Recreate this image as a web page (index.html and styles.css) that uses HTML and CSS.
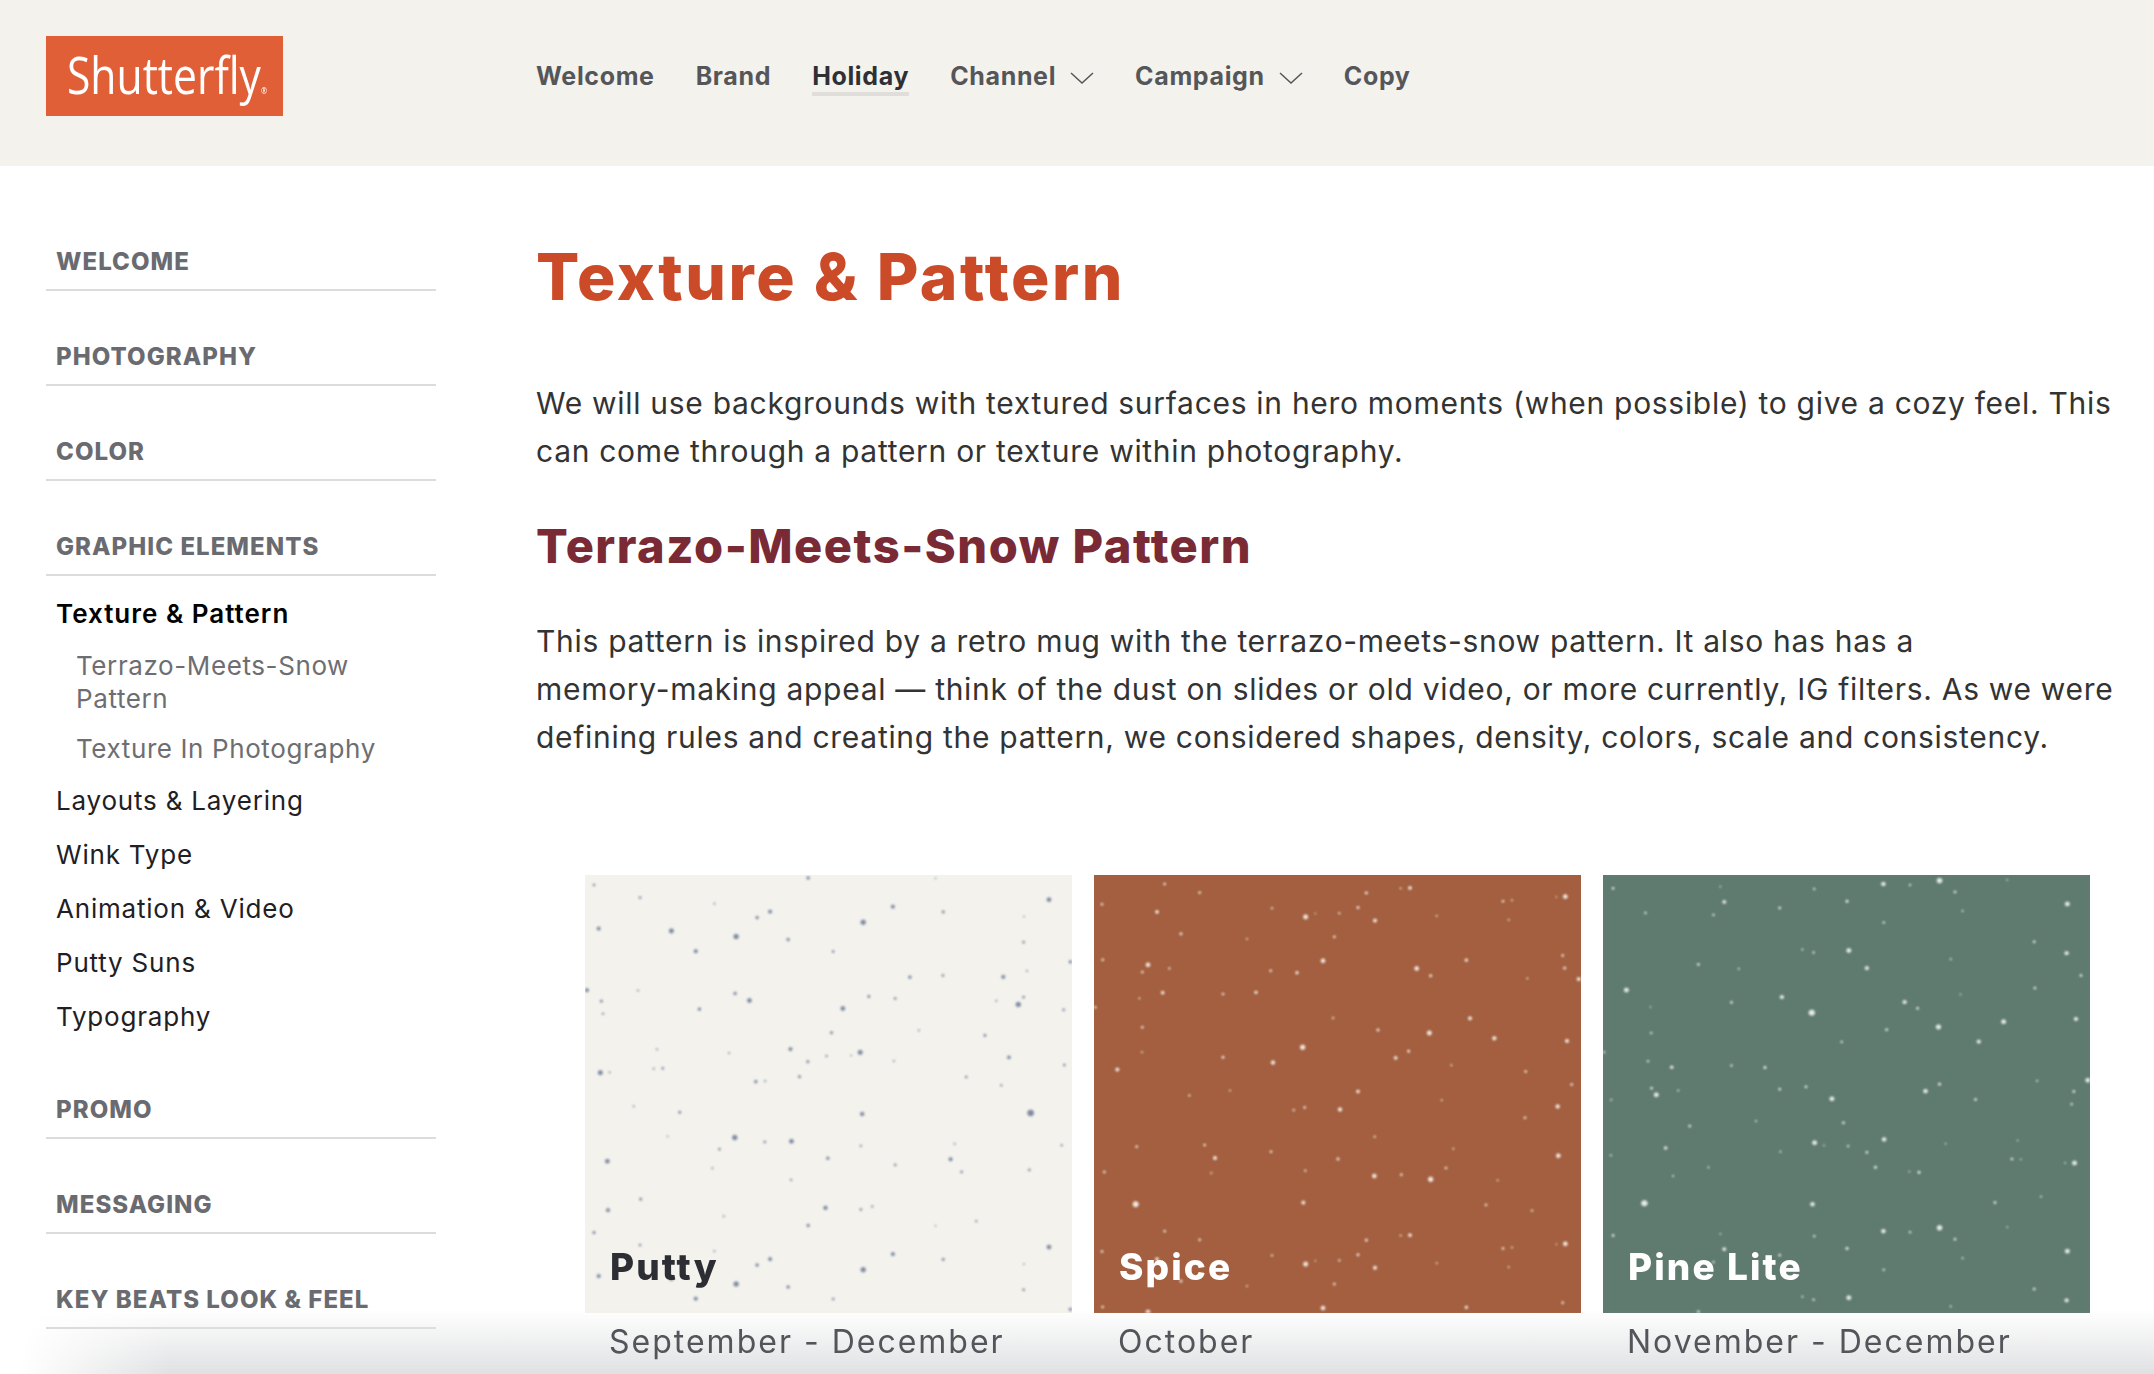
FILE: index.html
```html
<!DOCTYPE html>
<html lang="en">
<head>
  <meta charset="UTF-8" />
  <title>Texture &amp; Pattern - Shutterfly Holiday</title>
  <link rel="stylesheet" href="styles.css">
</head>
<body>
  <header class="topbar">
    <a class="logo"><span class="logo-word">Shutterfly<sup class="logo-reg">®</sup></span></a>
    <nav class="topnav">
      <a class="topnav-link">Welcome</a>
      <a class="topnav-link">Brand</a>
      <a class="topnav-link active">Holiday</a>
      <a class="topnav-link">Channel <svg class="chevron" viewBox="0 0 24 12"><polyline points="1,1 12,11 23,1"/></svg></a>
      <a class="topnav-link">Campaign <svg class="chevron" viewBox="0 0 24 12"><polyline points="1,1 12,11 23,1"/></svg></a>
      <a class="topnav-link">Copy</a>
    </nav>
  </header>

  <div class="page">
    <aside class="sidebar">
      <h4 class="side-head">WELCOME</h4>
      <h4 class="side-head">PHOTOGRAPHY</h4>
      <h4 class="side-head">COLOR</h4>
      <h4 class="side-head">GRAPHIC ELEMENTS</h4>
      <ul class="side-list">
        <li class="side-item current">Texture &amp; Pattern
          <ul class="side-sub">
            <li>Terrazo-Meets-Snow<br>Pattern</li>
            <li>Texture In Photography</li>
          </ul>
        </li>
        <li class="side-item">Layouts &amp; Layering</li>
        <li class="side-item">Wink Type</li>
        <li class="side-item">Animation &amp; Video</li>
        <li class="side-item">Putty Suns</li>
        <li class="side-item">Typography</li>
      </ul>
      <h4 class="side-head">PROMO</h4>
      <h4 class="side-head">MESSAGING</h4>
      <h4 class="side-head">KEY BEATS LOOK &amp; FEEL</h4>
    </aside>

    <main class="content">
      <h1>Texture &amp; Pattern</h1>
      <p>We will use backgrounds with textured surfaces in hero moments (when possible) to give a cozy feel. This<br>can come through a pattern or texture within photography.</p>
      <h2>Terrazo-Meets-Snow Pattern</h2>
      <p>This pattern is inspired by a retro mug with the terrazo-meets-snow pattern. It also has has a<br>memory-making appeal — think of the dust on slides or old video, or more currently, IG filters. As we were<br>defining rules and creating the pattern, we considered shapes, density, colors, scale and consistency.</p>

      <div class="swatches">
        <figure class="swatch putty">
          <svg class="speckle" viewBox="44 45 1460 1316" preserveAspectRatio="none">
            <g id="dots-putty">
              <circle cx="713" cy="54" r="4"/><circle cx="71" cy="75" r="3"/><circle cx="209" cy="113" r="3"/><circle cx="432" cy="131" r="2"/><circle cx="1095" cy="55" r="1.5"/><circle cx="1435" cy="119" r="6"/><circle cx="599" cy="155" r="5"/><circle cx="560" cy="173" r="4"/><circle cx="967" cy="140" r="5"/><circle cx="1118" cy="156" r="3.5"/><circle cx="1360" cy="170" r="1.5"/><circle cx="878" cy="187" r="7"/><circle cx="85" cy="206" r="5"/><circle cx="303" cy="213" r="6.5"/><circle cx="497" cy="230" r="7"/><circle cx="653" cy="239" r="4"/><circle cx="376" cy="274" r="5"/><circle cx="788" cy="275" r="3"/><circle cx="1359" cy="247" r="3"/><circle cx="1499" cy="306" r="4"/>
              <circle cx="1369" cy="333" r="2"/><circle cx="1018" cy="352" r="4"/><circle cx="1117" cy="347" r="3"/><circle cx="1298" cy="351" r="5"/><circle cx="50" cy="391" r="5"/><circle cx="203" cy="392" r="2"/><circle cx="494" cy="401" r="4"/><circle cx="537" cy="422" r="6"/><circle cx="93" cy="424" r="3.5"/><circle cx="387" cy="448" r="4"/><circle cx="98" cy="462" r="2.5"/><circle cx="817" cy="446" r="6"/><circle cx="895" cy="410" r="3.5"/><circle cx="974" cy="416" r="3"/><circle cx="1277" cy="423" r="2"/><circle cx="1343" cy="434" r="7"/><circle cx="1359" cy="412" r="3"/><circle cx="1479" cy="450" r="3"/><circle cx="783" cy="519" r="3.5"/><circle cx="1045" cy="512" r="2"/>
              <circle cx="1243" cy="527" r="3.5"/><circle cx="260" cy="569" r="2"/><circle cx="476" cy="580" r="2"/><circle cx="660" cy="568" r="5"/><circle cx="869" cy="578" r="6.5"/><circle cx="768" cy="589" r="2.5"/><circle cx="842" cy="587" r="1.5"/><circle cx="712" cy="606" r="3.5"/><circle cx="970" cy="604" r="2"/><circle cx="1315" cy="593" r="4.5"/><circle cx="1481" cy="616" r="3"/><circle cx="90" cy="639" r="6.5"/><circle cx="118" cy="638" r="2"/><circle cx="250" cy="627" r="2"/><circle cx="277" cy="626" r="3"/><circle cx="556" cy="666" r="4"/><circle cx="584" cy="664" r="2"/><circle cx="687" cy="651" r="3.5"/><circle cx="1187" cy="652" r="3"/><circle cx="1292" cy="677" r="2.5"/>
              <circle cx="190" cy="740" r="2"/><circle cx="328" cy="758" r="3.5"/><circle cx="875" cy="763" r="5.5"/><circle cx="1380" cy="760" r="9"/><circle cx="292" cy="830" r="1.5"/><circle cx="493" cy="834" r="7"/><circle cx="583" cy="847" r="3"/><circle cx="663" cy="845" r="6"/><circle cx="871" cy="859" r="2.5"/><circle cx="1152" cy="853" r="2"/><circle cx="1473" cy="857" r="2.5"/><circle cx="447" cy="869" r="3"/><circle cx="111" cy="905" r="6"/><circle cx="772" cy="896" r="4"/><circle cx="1140" cy="899" r="5"/><circle cx="974" cy="916" r="3"/><circle cx="426" cy="926" r="2"/><circle cx="1173" cy="937" r="3"/><circle cx="1376" cy="931" r="3"/><circle cx="662" cy="961" r="2.5"/>
              <circle cx="211" cy="1019" r="3.5"/><circle cx="113" cy="1052" r="5"/><circle cx="765" cy="1045" r="5.5"/><circle cx="871" cy="1050" r="3"/><circle cx="905" cy="1041" r="2.5"/><circle cx="460" cy="1070" r="2"/><circle cx="1217" cy="1085" r="2.5"/><circle cx="71" cy="1120" r="3"/>
            </g>
            <use href="#dots-putty" y="1044"/>
          </svg>
          <figcaption class="swatch-name">Putty</figcaption>
        </figure>
        <figure class="swatch spice">
          <svg class="speckle" viewBox="41 45 1461 1317" preserveAspectRatio="none">
            <g id="dots-spice">
              <circle cx="253" cy="72" r="3"/><circle cx="358" cy="98" r="3"/><circle cx="858" cy="99" r="3.5"/><circle cx="961" cy="85" r="2"/><circle cx="989" cy="84" r="4.5"/><circle cx="1455" cy="110" r="6"/><circle cx="1428" cy="111" r="1.5"/><circle cx="1268" cy="124" r="3"/><circle cx="1295" cy="121" r="2"/><circle cx="65" cy="133" r="3"/><circle cx="230" cy="156" r="4.5"/><circle cx="575" cy="145" r="2.5"/><circle cx="676" cy="171" r="6.5"/><circle cx="705" cy="161" r="1.5"/><circle cx="777" cy="160" r="2.5"/><circle cx="833" cy="143" r="3.5"/><circle cx="884" cy="182" r="5"/><circle cx="1069" cy="168" r="2"/><circle cx="1285" cy="180" r="2"/><circle cx="302" cy="222" r="3.5"/>
              <circle cx="500" cy="237" r="2"/><circle cx="762" cy="231" r="3"/><circle cx="1447" cy="287" r="3"/><circle cx="67" cy="300" r="3"/><circle cx="728" cy="303" r="6"/><circle cx="1158" cy="301" r="4"/><circle cx="203" cy="315" r="6"/><circle cx="267" cy="326" r="2.5"/><circle cx="186" cy="337" r="3"/><circle cx="571" cy="333" r="3"/><circle cx="650" cy="339" r="4"/><circle cx="1009" cy="326" r="6"/><circle cx="1051" cy="348" r="3.5"/><circle cx="1453" cy="325" r="3.5"/><circle cx="1341" cy="356" r="2"/><circle cx="1495" cy="358" r="5"/><circle cx="247" cy="399" r="4.5"/><circle cx="428" cy="403" r="3"/><circle cx="527" cy="398" r="4"/><circle cx="177" cy="416" r="2"/>
              <circle cx="45" cy="443" r="3"/><circle cx="758" cy="475" r="2.5"/><circle cx="1169" cy="476" r="5"/><circle cx="186" cy="503" r="3"/><circle cx="893" cy="511" r="3.5"/><circle cx="1047" cy="520" r="6.5"/><circle cx="1242" cy="536" r="5.5"/><circle cx="1460" cy="544" r="5"/><circle cx="667" cy="563" r="7"/><circle cx="185" cy="578" r="2"/><circle cx="985" cy="575" r="3.5"/><circle cx="946" cy="595" r="4.5"/><circle cx="428" cy="593" r="3.5"/><circle cx="578" cy="609" r="5.5"/><circle cx="111" cy="630" r="5"/><circle cx="1113" cy="617" r="2"/><circle cx="1336" cy="636" r="3"/><circle cx="1474" cy="675" r="3"/><circle cx="449" cy="693" r="2"/><circle cx="833" cy="696" r="4.5"/>
              <circle cx="327" cy="708" r="2.5"/><circle cx="1084" cy="722" r="2"/><circle cx="1432" cy="741" r="5.5"/><circle cx="640" cy="752" r="2.5"/><circle cx="673" cy="744" r="3"/><circle cx="779" cy="750" r="5.5"/><circle cx="1334" cy="775" r="3"/><circle cx="883" cy="832" r="2.5"/><circle cx="373" cy="857" r="3"/><circle cx="169" cy="862" r="3"/><circle cx="572" cy="877" r="3"/><circle cx="1119" cy="868" r="2"/><circle cx="404" cy="896" r="5"/><circle cx="773" cy="899" r="3.5"/><circle cx="1434" cy="889" r="6"/><circle cx="72" cy="938" r="3"/><circle cx="675" cy="934" r="2.5"/><circle cx="393" cy="941" r="2"/><circle cx="1097" cy="926" r="3"/><circle cx="882" cy="950" r="6"/>
              <circle cx="963" cy="946" r="3"/><circle cx="1051" cy="960" r="7"/><circle cx="1252" cy="963" r="2"/><circle cx="1217" cy="1037" r="3"/><circle cx="669" cy="1030" r="5"/><circle cx="166" cy="1035" r="8"/><circle cx="1355" cy="1054" r="2.5"/>
            </g>
            <use href="#dots-spice" y="1044"/>
          </svg>
          <figcaption class="swatch-name light">Spice</figcaption>
        </figure>
        <figure class="swatch pine">
          <svg class="speckle" viewBox="37 45 1353 1317" preserveAspectRatio="none">
            <g id="dots-pine">
              <circle cx="972" cy="62" r="7"/><circle cx="816" cy="72" r="5.5"/><circle cx="890" cy="75" r="2.5"/><circle cx="65" cy="85" r="3"/><circle cx="363" cy="80" r="1.5"/><circle cx="624" cy="87" r="2.5"/><circle cx="1015" cy="96" r="3"/><circle cx="1160" cy="60" r="1.5"/><circle cx="374" cy="126" r="4.5"/><circle cx="715" cy="124" r="3.5"/><circle cx="1327" cy="132" r="6"/><circle cx="155" cy="159" r="2.5"/><circle cx="344" cy="165" r="2.5"/><circle cx="528" cy="144" r="3"/><circle cx="1036" cy="153" r="2"/><circle cx="817" cy="188" r="2.5"/><circle cx="1235" cy="246" r="3"/><circle cx="591" cy="269" r="2"/><circle cx="622" cy="278" r="2.5"/><circle cx="720" cy="272" r="6"/>
              <circle cx="1325" cy="280" r="5"/><circle cx="1003" cy="298" r="2"/><circle cx="302" cy="314" r="3"/><circle cx="414" cy="327" r="2"/><circle cx="770" cy="325" r="5"/><circle cx="1365" cy="347" r="3"/><circle cx="102" cy="391" r="6"/><circle cx="1237" cy="385" r="3"/><circle cx="1030" cy="404" r="1.5"/><circle cx="534" cy="412" r="5"/><circle cx="394" cy="428" r="3"/><circle cx="875" cy="427" r="5"/><circle cx="911" cy="446" r="3"/><circle cx="169" cy="442" r="1.5"/><circle cx="617" cy="459" r="8"/><circle cx="1150" cy="486" r="6"/><circle cx="1351" cy="478" r="5"/><circle cx="969" cy="502" r="6.5"/><circle cx="825" cy="510" r="3"/><circle cx="171" cy="520" r="2.5"/>
              <circle cx="1081" cy="546" r="5"/><circle cx="700" cy="547" r="2.5"/><circle cx="40" cy="578" r="2.5"/><circle cx="162" cy="605" r="2.5"/><circle cx="228" cy="623" r="4"/><circle cx="394" cy="618" r="2.5"/><circle cx="487" cy="624" r="3.5"/><circle cx="1384" cy="662" r="6"/><circle cx="1243" cy="664" r="2"/><circle cx="172" cy="686" r="3"/><circle cx="185" cy="706" r="6"/><circle cx="246" cy="693" r="2"/><circle cx="528" cy="689" r="3"/><circle cx="601" cy="682" r="3"/><circle cx="933" cy="695" r="5.5"/><circle cx="972" cy="674" r="3.5"/><circle cx="1345" cy="696" r="3"/><circle cx="673" cy="718" r="6"/><circle cx="1072" cy="720" r="3"/><circle cx="60" cy="721" r="2"/>
              <circle cx="1339" cy="734" r="2.5"/><circle cx="462" cy="785" r="2"/><circle cx="705" cy="790" r="3"/><circle cx="278" cy="800" r="3"/><circle cx="818" cy="840" r="5.5"/><circle cx="625" cy="850" r="6"/><circle cx="651" cy="858" r="1.5"/><circle cx="718" cy="860" r="2.5"/><circle cx="989" cy="853" r="1.5"/><circle cx="1189" cy="843" r="1.5"/><circle cx="211" cy="866" r="4"/><circle cx="770" cy="879" r="3"/><circle cx="530" cy="877" r="2"/><circle cx="59" cy="888" r="2"/><circle cx="1173" cy="899" r="3"/><circle cx="1198" cy="900" r="1.5"/><circle cx="1347" cy="911" r="6"/><circle cx="1321" cy="911" r="1.5"/><circle cx="794" cy="924" r="3.5"/><circle cx="330" cy="924" r="2"/>
              <circle cx="888" cy="937" r="1.5"/><circle cx="915" cy="939" r="3.5"/><circle cx="232" cy="950" r="2"/><circle cx="619" cy="1035" r="5.5"/><circle cx="152" cy="1032" r="8"/><circle cx="1126" cy="1030" r="3"/><circle cx="1254" cy="1012" r="2"/>
            </g>
            <use href="#dots-pine" y="1044"/>
          </svg>
          <figcaption class="swatch-name light">Pine Lite</figcaption>
        </figure>
      </div>
      <div class="swatch-dates">
        <span>September - December</span>
        <span>October</span>
        <span>November - December</span>
      </div>
    </main>
  </div>

  <div class="bottom-fade"></div>
</body>
</html>
```

FILE: styles.css
```css
* {
  box-sizing: border-box;
}

html, body {
  height: 100%;
}

body {
  margin: 0;
  background: #fff;
  color: #333;
  font-family: Inter, "Open Sans", sans-serif;
  overflow: hidden;
}

.topbar {
  display: flex;
  align-items: center;
  height: 166px;
  padding-left: 46px;
  padding-bottom: 14px;
  background: #f3f2ed;
}

.logo {
  display: flex;
  align-items: center;
  justify-content: center;
  width: 237px;
  height: 80px;
  padding: 0 0 5px 4px;
  background: #e15f36;
  overflow: hidden;
}

.logo-word {
  display: inline-block;
  color: #fff;
  font-family: "Open Sans", sans-serif;
  font-weight: 400;
  font-size: 52px;
  line-height: 1;
  transform: scaleX(0.82);
  white-space: nowrap;
}

.logo-reg {
  font-size: 9px;
  vertical-align: baseline;
}

.topnav {
  display: flex;
  align-items: center;
  margin-left: 253px;
  margin-top: 5px;
  gap: 41px;
}

.topnav-link {
  display: flex;
  align-items: center;
  gap: 14px;
  color: #55565a;
  font-size: 25px;
  font-weight: 700;
  letter-spacing: 0.65px;
  line-height: 30px;
  border-bottom: 4px solid transparent;
  padding-bottom: 1px;
}

.topnav-link.active {
  color: #2e3035;
  border-bottom-color: #dfdedb;
}

.chevron {
  width: 24px;
  height: 12px;
  margin-top: 4px;
  fill: none;
  stroke: #55565a;
  stroke-width: 1.5;
}

.page {
  display: flex;
}

.sidebar {
  width: 390px;
  margin-left: 46px;
  padding-top: 77px;
  flex-shrink: 0;
}

.side-head {
  margin: 0 0 47px;
  padding: 4px 0 0 10px;
  height: 48px;
  border-bottom: 2px solid #dcdcdc;
  color: #6a6b70;
  font-size: 24px;
  font-weight: 800;
  letter-spacing: 1.05px;
  line-height: 30px;
  white-space: nowrap;
}

.side-list {
  list-style: none;
  margin: -26px 0 58px;
  padding: 0 0 0 10px;
}

.side-item {
  color: #1f2024;
  font-size: 26px;
  letter-spacing: 0.8px;
  line-height: 33px;
  margin-bottom: 21px;
}

.side-item.current {
  color: #000;
  font-weight: 600;
  letter-spacing: 1px;
  margin-bottom: 19px;
}

.side-sub {
  list-style: none;
  margin: 19px 0 0;
  padding-left: 20px;
  color: #6d6e72;
  font-weight: 400;
  letter-spacing: 0.6px;
}

.side-sub li {
  margin-bottom: 17px;
}

.content {
  flex: 1;
  margin-left: 100px;
  padding-top: 71px;
}

h1 {
  margin: 0;
  color: #cb4a28;
  font-size: 64px;
  font-weight: 800;
  letter-spacing: 2.6px;
  line-height: 80px;
}

h2 {
  margin: 41px 0 0;
  color: #7a2a35;
  font-size: 47px;
  font-weight: 800;
  letter-spacing: 1.5px;
  line-height: 60px;
}

.content p {
  margin: 0;
  font-size: 30px;
  letter-spacing: 0.7px;
  line-height: 48px;
  white-space: nowrap;
}

.content h1 + p {
  margin-top: 62px;
}

.content h2 + p {
  margin-top: 41px;
}

.swatches {
  display: flex;
  gap: 22px;
  margin-top: 114px;
  margin-left: 49px;
}

.swatch {
  position: relative;
  width: 487px;
  height: 438px;
  margin: 0;
  overflow: hidden;
  flex-shrink: 0;
}

.putty { background: #f3f2ed; fill: #7f8ba3; stroke: #7f8ba3; }
.spice { background: #a35f3f; fill: #f0e6df; stroke: #f0e6df; }
.pine { background: #5f7a6f; fill: #e4ebe7; stroke: #e4ebe7; }

.speckle {
  display: block;
  width: 100%;
  height: 100%;
  stroke-width: 2.5;
  filter: blur(0.8px);
}

.swatch-name {
  position: absolute;
  left: 25px;
  bottom: 24px;
  color: #2c2e33;
  font-size: 37px;
  font-weight: 800;
  letter-spacing: 2.1px;
  line-height: 44px;
  filter: blur(0.5px);
}

.swatch-name.light {
  color: #fff;
}

.swatch-dates {
  position: relative;
  z-index: 1;
  display: flex;
  gap: 22px;
  margin-left: 49px;
  margin-top: 8px;
}

.swatch-dates span {
  flex-shrink: 0;
  width: 487px;
  padding-left: 24px;
  color: #53555b;
  font-size: 32px;
  letter-spacing: 2px;
  line-height: 42px;
  filter: blur(0.5px);
}

/* soft shadow along the bottom edge of the window */
.bottom-fade {
  position: fixed;
  left: 0;
  right: 0;
  bottom: 0;
  height: 64px;
  background: linear-gradient(to bottom, rgba(222, 223, 225, 0), rgba(222, 223, 225, 0.95));
  -webkit-mask-image: linear-gradient(to right, transparent 20px, #000 170px);
  mask-image: linear-gradient(to right, transparent 20px, #000 170px);
  pointer-events: none;
}
```
